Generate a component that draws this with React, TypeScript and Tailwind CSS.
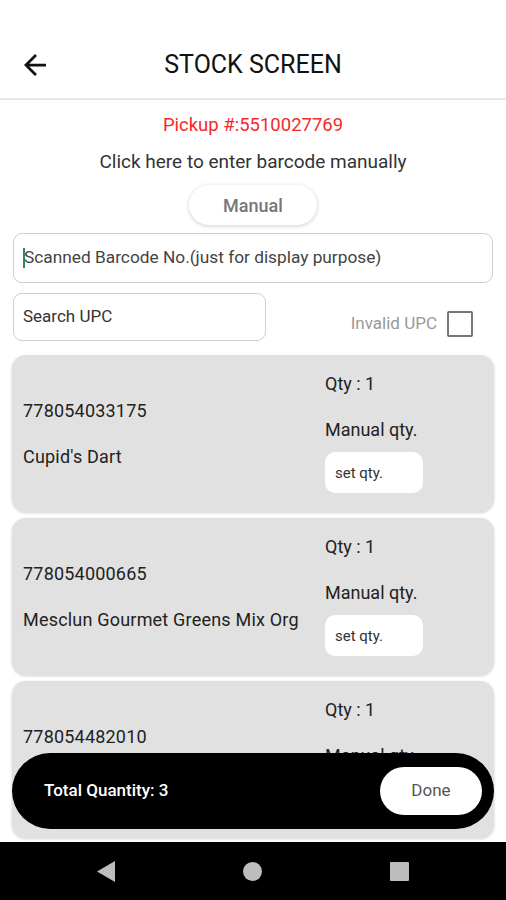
import React from "react";

type Item = { upc: string; name: string; qty: number };

const items: Item[] = [
  { upc: "778054033175", name: "Cupid's Dart", qty: 1 },
  { upc: "778054000665", name: "Mesclun Gourmet Greens Mix Org", qty: 1 },
  // name sits under the total bar in the screenshot
  { upc: "778054482010", name: "\u00a0", qty: 1 },
];

function BackArrow() {
  return (
    <svg width="22" height="22" viewBox="4 4 16 16" fill="#111">
      <path d="M20 11H7.83l5.59-5.59L12 4l-8 8 8 8 1.41-1.41L7.83 13H20v-2z" />
    </svg>
  );
}

function ItemCard({ item }: { item: Item }) {
  return (
    <div className="flex h-[157px] shrink-0 items-center rounded-[14px] bg-[#e1e1e1] pl-[11px] shadow-[0_1px_3px_rgba(0,0,0,0.18)]">
      <div className="flex w-[302px] flex-col gap-[26px] text-[18px] leading-[20px] tracking-[0.2px] text-[#222]">
        <span>{item.upc}</span>
        <span>{item.name}</span>
      </div>
      <div className="flex flex-col text-[18px] leading-[20px] text-[#222]">
        <span>Qty : {item.qty}</span>
        <span className="mt-[26px]">Manual qty.</span>
        <div className="mt-[12px] flex h-[41px] w-[98px] items-center rounded-[10px] bg-white pl-[10px] text-[15px] text-[#333]">
          set qty.
        </div>
      </div>
    </div>
  );
}

export default function App() {
  return (
    <div className="relative flex h-[900px] w-full flex-col overflow-hidden bg-white font-['Roboto',sans-serif]">
      <div className="flex flex-1 flex-col overflow-hidden">
        {/* header */}
        <div className="relative flex h-[100px] shrink-0 items-start justify-center border-b-2 border-[#e8e8e8] pt-[50px]">
          <div className="absolute left-[24px] top-[54px]">
            <BackArrow />
          </div>
          <span className="text-[25px] leading-[30px] text-[#111]">STOCK SCREEN</span>
        </div>

        <div className="mt-[14px] text-center text-[18.5px] leading-[22px] text-[#f42a2a]">
          Pickup #:5510027769
        </div>
        <div className="mt-[15px] text-center text-[19px] leading-[22px] text-[#333]">
          Click here to enter barcode manually
        </div>
        <div className="mt-[12px] flex justify-center">
          <div className="flex h-[40px] w-[128px] items-center justify-center rounded-full bg-white text-[18px] font-medium text-[#777] shadow-[0_1px_4px_rgba(0,0,0,0.2)]">
            Manual
          </div>
        </div>

        <div className="mx-[13px] mt-[8px] flex h-[50px] shrink-0 items-center rounded-[9px] border border-[#cfcfcf] pl-[9px] text-[17.3px] text-[#444]">
          <span className="mr-[-1px] h-[20px] w-[2px] bg-[#2e8b57]" />
          Scanned Barcode No.(just for display purpose)
        </div>

        <div className="mx-[13px] mt-[10px] flex items-center">
          <div className="flex h-[48px] w-[253px] items-center rounded-[9px] border border-[#cfcfcf] pl-[9px] text-[17px] text-[#333]">
            Search UPC
          </div>
          <div className="ml-auto mr-[20px] mt-[14px] flex items-center gap-[10px]">
            <span className="text-[17px] text-[#999]">Invalid UPC</span>
            <span className="h-[26px] w-[26px] rounded-[2px] border-2 border-[#777]" />
          </div>
        </div>

        <div className="mx-[12px] mt-[14px] flex flex-col gap-[6px]">
          {items.map((it) => (
            <ItemCard key={it.upc} item={it} />
          ))}
        </div>
      </div>

      {/* total bar overlay */}
      <div className="absolute bottom-[71px] left-[12px] right-[12px] flex h-[76px] items-center rounded-full bg-black pl-[32px] pr-[12px]">
        <span className="text-[17px] font-medium text-white">Total Quantity: 3</span>
        <div className="ml-auto flex h-[48px] w-[102px] items-center justify-center rounded-full bg-white text-[17px] text-[#555]">
          Done
        </div>
      </div>

      {/* android nav */}
      <div className="flex h-[58px] shrink-0 items-center justify-between bg-black px-[97px]">
        <svg width="18" height="21" viewBox="0 0 18 21">
          <path d="M18 0v21L0 10.5z" fill="#bdbdbd" />
        </svg>
        <span className="h-[19px] w-[19px] rounded-full bg-[#bdbdbd]" />
        <span className="h-[19px] w-[19px] rounded-[1px] bg-[#bdbdbd]" />
      </div>
    </div>
  );
}
